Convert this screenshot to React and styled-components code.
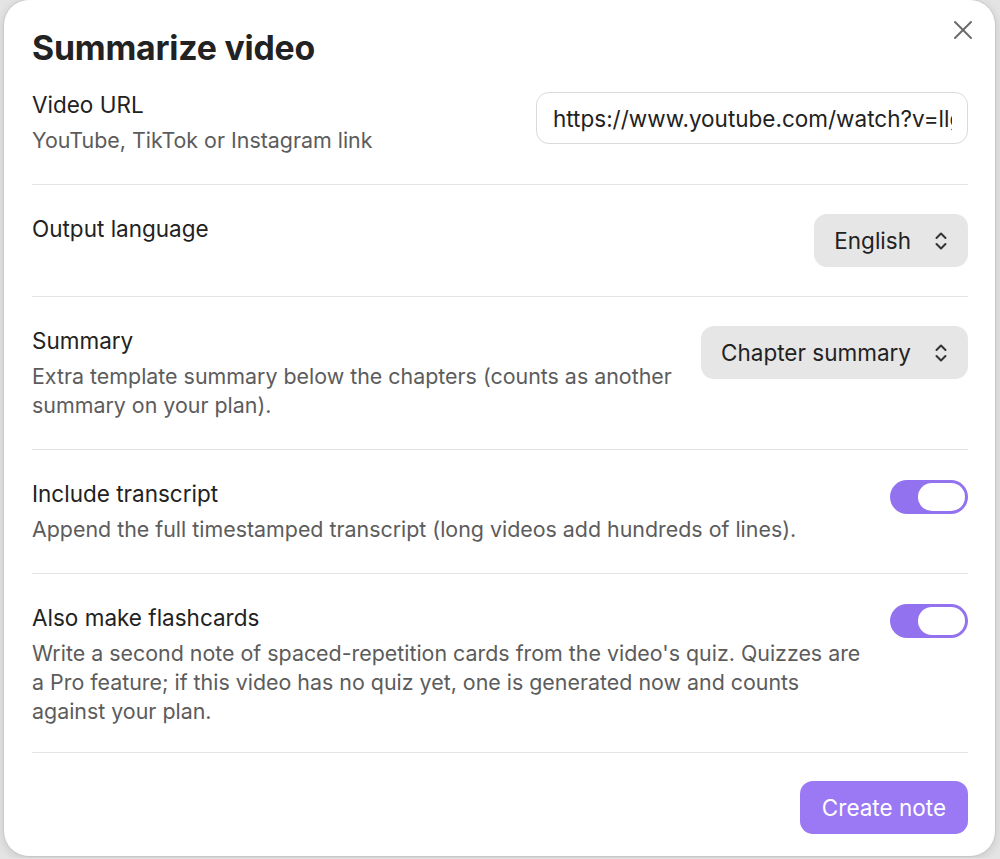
import styled, { createGlobalStyle } from "styled-components";

const GlobalStyle = createGlobalStyle`
  html, body {
    margin: 0;
    padding: 0;
    background: #e4e4e4;
    font-family: "Inter", "Noto Sans", sans-serif;
    -webkit-font-smoothing: antialiased;
  }
`;

const Backdrop = styled.div`
  padding: 0 4px 1px 3px;
  height: 859px;
  box-sizing: border-box;
`;

const Modal = styled.div`
  position: relative;
  box-sizing: border-box;
  height: 858px;
  margin-top: -1px;
  background: #fff;
  border: 1px solid #c9c9c9;
  border-radius: 26px;
  box-shadow: 0 2px 10px rgba(0, 0, 0, 0.12);
  padding: 30px 27px 0 28px;
`;

const CloseButton = styled.button`
  position: absolute;
  top: 19px;
  right: 21px;
  width: 22px;
  height: 22px;
  padding: 0;
  border: none;
  background: none;
  color: #6a6a6a;
  display: flex;
  align-items: center;
  justify-content: center;
  cursor: pointer;
`;

const Title = styled.h1`
  margin: 0;
  font-size: 33.8px;
  line-height: 36px;
  font-weight: 700;
  color: #222;
  letter-spacing: -0.2px;
`;

const SettingRow = styled.div`
  display: flex;
  align-items: flex-start;
  gap: 24px;
  padding-top: ${({ $first }) => ($first ? "24px" : "29px")};
  padding-bottom: ${({ $last }) => ($last ? "26px" : "29px")};
  border-top: ${({ $first }) => ($first ? "none" : "1px solid #e3e3e3")};
`;

const Info = styled.div`
  flex: 1;
  min-width: 0;
`;

const Name = styled.div`
  font-size: 22.5px;
  line-height: 30px;
  color: #222;
`;

const Desc = styled.div`
  margin-top: 6px;
  font-size: 21.4px;
  line-height: 29px;
  color: #5c5c5c;
`;

const Control = styled.div`
  flex-shrink: 0;
  display: flex;
  margin-top: ${({ $offset }) => $offset || 0}px;
`;

const TextInput = styled.input`
  box-sizing: border-box;
  width: 432px;
  height: 52px;
  padding: 0 15px 0 16px;
  border: 1px solid #dadada;
  border-radius: 13px;
  font-family: inherit;
  font-size: 22.5px;
  color: #222;
  background: #fff;
  outline: none;
`;

const Dropdown = styled.div`
  box-sizing: border-box;
  height: 53px;
  padding: 0 20px;
  display: flex;
  align-items: center;
  gap: 23px;
  background: #e6e6e6;
  border-radius: 13px;
  font-size: 22.5px;
  color: #222;
`;

const Toggle = styled.div`
  position: relative;
  box-sizing: border-box;
  width: 78px;
  height: 34px;
  border-radius: 17px;
  background: ${({ $on }) => ($on ? "#9372ef" : "#d0d0d0")};
`;

const Knob = styled.div`
  position: absolute;
  top: 3px;
  ${({ $on }) => ($on ? "right: 3px;" : "left: 3px;")}
  width: 47px;
  height: 28px;
  border-radius: 14px;
  background: #fff;
`;

const Footer = styled.div`
  display: flex;
  justify-content: flex-end;
  padding-top: 28px;
  border-top: 1px solid #e3e3e3;
`;

const PrimaryButton = styled.button`
  height: 53px;
  padding: 0 22px;
  border: none;
  border-radius: 13px;
  background: #9b78f4;
  color: #fff;
  font-family: inherit;
  font-size: 22.5px;
  cursor: pointer;
`;

const UpDown = () => (
  <svg width="14" height="20" viewBox="0 0 14 20" fill="none" stroke="#333" strokeWidth="2" strokeLinecap="round" strokeLinejoin="round">
    <path d="M2.5 7 7 2.5 11.5 7" />
    <path d="M2.5 13 7 17.5 11.5 13" />
  </svg>
);

const settings = [
  {
    name: "Include transcript",
    desc: "Append the full timestamped transcript (long videos add hundreds of lines).",
  },
  {
    name: "Also make flashcards",
    desc: "Write a second note of spaced-repetition cards from the video's quiz. Quizzes are a Pro feature; if this video has no quiz yet, one is generated now and counts against your plan.",
  },
];

export default function App() {
  return (
    <>
      <GlobalStyle />
      <Backdrop>
        <Modal>
          <CloseButton aria-label="Close">
            <svg width="20" height="20" viewBox="0 0 20 20" fill="none" stroke="currentColor" strokeWidth="2" strokeLinecap="round">
              <path d="M2 2 18 18" />
              <path d="M18 2 2 18" />
            </svg>
          </CloseButton>
          <Title>Summarize video</Title>

          <SettingRow $first>
            <Info>
              <Name>Video URL</Name>
              <Desc>YouTube, TikTok or Instagram link</Desc>
            </Info>
            <Control $offset={2}>
              <TextInput defaultValue="https://www.youtube.com/watch?v=llgHvL5H8Q0" />
            </Control>
          </SettingRow>

          <SettingRow>
            <Info>
              <Name>Output language</Name>
            </Info>
            <Control>
              <Dropdown>
                English
                <UpDown />
              </Dropdown>
            </Control>
          </SettingRow>

          <SettingRow>
            <Info>
              <Name>Summary</Name>
              <Desc>Extra template summary below the chapters (counts as another summary on your plan).</Desc>
            </Info>
            <Control>
              <Dropdown>
                Chapter summary
                <UpDown />
              </Dropdown>
            </Control>
          </SettingRow>

          {settings.map((s, i) => (
            <SettingRow key={s.name} $last={i === settings.length - 1}>
              <Info>
                <Name>{s.name}</Name>
                <Desc>{s.desc}</Desc>
              </Info>
              <Control $offset={1}>
                <Toggle $on>
                  <Knob $on />
                </Toggle>
              </Control>
            </SettingRow>
          ))}

          <Footer>
            <PrimaryButton>Create note</PrimaryButton>
          </Footer>
        </Modal>
      </Backdrop>
    </>
  );
}
